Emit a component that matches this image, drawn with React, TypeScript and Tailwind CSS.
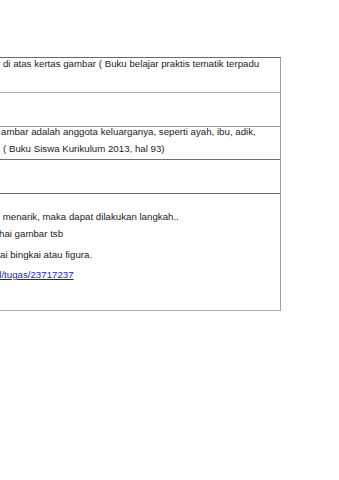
import React from "react";

const font = { fontFamily: '"Liberation Sans", Arial, Helvetica, sans-serif' };

export default function App() {
  return (
    <div className="w-[339px] h-[480px] bg-white overflow-hidden" style={font}>
      <div className="pt-[57px]">
        <div className="w-[281px] border-t border-r border-b border-t-[#6b6b6b] border-r-[#a0a0a0] border-b-[#b0b0b0] text-[9.7px] text-[#1c1c1c] whitespace-nowrap">
          <div className="h-[35px] border-b border-[#b0b0b0] overflow-hidden">
            <div className="leading-[17px] mt-[-3px] ml-[-3px]">r di atas kertas gambar ( Buku belajar praktis tematik terpadu</div>
          </div>
          <div className="h-[34px] border-b border-[#9a9a9a]" />
          <div className="h-[33px] border-b border-[#6e6e6e] overflow-hidden">
            <div className="leading-[17px] mt-[-4px]">
              <div className="ml-[1px]">ambar adalah anggota keluarganya, seperti ayah, ibu, adik,</div>
              <div className="ml-[3px]">( Buku Siswa Kurikulum 2013, hal 93)</div>
            </div>
          </div>
          <div className="h-[34px] border-b border-[#6e6e6e]" />
          <div className="h-[116px] overflow-hidden">
            <div className="leading-[17px] pt-[14px]">
              <div className="ml-[0px]">&nbsp;menarik, maka dapat dilakukan langkah..</div>
              <div className="ml-[-1px]">hai gambar tsb</div>
              <div className="ml-[0px] mt-[4px]">ai bingkai atau figura.</div>
              <div className="ml-[-4px] mt-[3px]">
                <span className="text-[#1a1ad0] underline">d/tugas/23717237</span>
              </div>
            </div>
          </div>
        </div>
      </div>
    </div>
  );
}
